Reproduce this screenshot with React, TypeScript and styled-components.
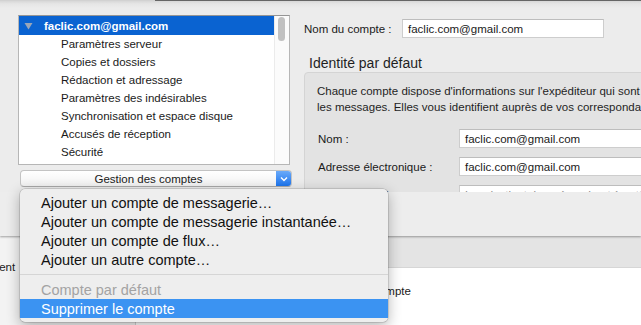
import React from "react";
import styled, { createGlobalStyle } from "styled-components";

const Global = createGlobalStyle`
  html, body { margin: 0; padding: 0; background: #ffffff; }
  * { box-sizing: border-box; }
`;

const FONT = `"Liberation Sans", Arial, sans-serif`;

const Screen = styled.div`
  position: relative;
  width: 641px;
  height: 325px;
  overflow: hidden;
  font-family: ${FONT};
  font-size: 11.5px;
  color: #1a1a1a;
  background: #ffffff;
`;

const Window = styled.div`
  position: relative;
  z-index: 1;
  height: 236px;
  display: flex;
  flex-direction: column;
  background: linear-gradient(#d3d3d3 0px, #e6e6e6 4px, #ececec 8px);
  box-shadow: 0 1px 2px rgba(0, 0, 0, 0.35);
`;

const TopEdge = styled.div`
  display: flex;
  height: 1px;
`;

const TopSeg = styled.div<{ $dark?: boolean; $w?: number }>`
  height: 1px;
  ${(p) => (p.$w ? `width: ${p.$w}px;` : "flex: 1;")}
  background: ${(p) => (p.$dark ? "#666666" : "#d2d2d2")};
`;

const Body = styled.div`
  height: 191px;
  display: flex;
  gap: 12px;
  padding-left: 18px;
  overflow: hidden;
`;

const LeftCol = styled.div`
  width: 274px;
  flex: none;
  padding-top: 14px;
  display: flex;
  flex-direction: column;
`;

const ListBox = styled.div`
  width: 272px;
  height: 150px;
  display: flex;
  background: #ffffff;
  border: 1px solid #b6b6b6;
  border-top-color: #959595;
`;

const Rows = styled.div`
  flex: 1;
  display: flex;
  flex-direction: column;
`;

const Row = styled.div<{ $selected?: boolean }>`
  height: ${(p) => (p.$selected ? 19 : 18)}px;
  display: flex;
  align-items: center;
  padding-left: ${(p) => (p.$selected ? 5 : 42)}px;
  gap: 11px;
  background: ${(p) => (p.$selected ? "#0a63d1" : "transparent")};
  color: ${(p) => (p.$selected ? "#ffffff" : "#1a1a1a")};
  font-weight: ${(p) => (p.$selected ? 700 : 400)};
  white-space: nowrap;
`;

const Track = styled.div`
  width: 15px;
  flex: none;
  background: #fbfbfb;
  border-left: 1px solid #ebebeb;
  padding: 1px 0 0 3px;
`;

const Thumb = styled.div`
  width: 7px;
  height: 24px;
  border-radius: 4px;
  background: #c1c1c1;
`;

const PopupButton = styled.div`
  margin: 5px 0 0 2px;
  width: 272px;
  height: 17px;
  display: flex;
  border: 1px solid #c3c3c3;
  border-bottom-color: #a8a8a8;
  border-radius: 4px;
  background: linear-gradient(#ffffff, #f1f1f1);
  overflow: hidden;
`;

const PopupLabel = styled.div`
  flex: 1;
  display: flex;
  align-items: center;
  justify-content: center;
  font-size: 11.5px;
  color: #1a1a1a;
`;

const PopupArrow = styled.div`
  width: 15px;
  display: flex;
  align-items: center;
  justify-content: center;
  background: linear-gradient(#6aaaf9, #1d75ee);
`;

const RightCol = styled.div`
  flex: 1;
  padding-top: 18px;
  display: flex;
  flex-direction: column;
  min-width: 400px;
`;

const FieldRow = styled.div<{ $labelWidth: number; $indent?: number }>`
  display: flex;
  align-items: center;
  height: 19px;
  margin-left: ${(p) => p.$indent ?? 0}px;
  & > span {
    width: ${(p) => p.$labelWidth}px;
    flex: none;
    white-space: nowrap;
  }
`;

const TextField = styled.div<{ $width: number; $placeholder?: boolean }>`
  width: ${(p) => p.$width}px;
  height: 19px;
  flex: none;
  display: flex;
  align-items: center;
  padding-left: 5px;
  background: #ffffff;
  border: 1px solid #cdcdcd;
  border-top-color: #bdbdbd;
  color: ${(p) => (p.$placeholder ? "#8a8a8a" : "#1a1a1a")};
  white-space: nowrap;
  overflow: hidden;
`;

const Heading = styled.div`
  margin-top: 17px;
  padding-left: 5px;
  height: 17px;
  line-height: 17px;
  font-size: 14px;
  color: #1f1f1f;
`;

const GroupBox = styled.div`
  width: 420px;
  border: 1px solid #d4d4d4;
  border-radius: 4px;
  background: #e3e3e3;
  padding: 10px 0 0 12px;
  display: flex;
  flex-direction: column;
  gap: 9px;
`;

const Description = styled.div`
  line-height: 16px;
  white-space: nowrap;
  margin-bottom: 5px;
  color: #1f1f1f;
`;

const Footer = styled.div`
  flex: 1;
  background: #ededed;
`;

const Lower = styled.div`
  display: flex;
  height: 89px;
`;

const Sidebar = styled.div`
  width: 136px;
  flex: none;
  background: #f3f3f3;
  border-right: 1px solid #d2d2d2;
  padding-top: 25px;
  overflow: hidden;
  white-space: nowrap;
  & > span {
    display: block;
    margin-left: -50px;
  }
`;

const Main = styled.div`
  flex: 1;
  display: flex;
  flex-direction: column;
`;

const Strip = styled.div`
  height: 32px;
  background: #e4e4e4;
  border-bottom: 1px solid #d6d6d6;
`;

const MainText = styled.div`
  padding: 17px 0 0 188px;
  white-space: nowrap;
`;

const Menu = styled.div`
  position: absolute;
  z-index: 5;
  left: 20px;
  top: 189px;
  width: 368px;
  padding: 4px 0;
  border-radius: 5px;
  background: #eeeeee;
  box-shadow: 0 0 0 0.5px rgba(0, 0, 0, 0.22), 0 4px 14px rgba(0, 0, 0, 0.3);
  font-size: 14.5px;
`;

const MenuItem = styled.div<{ $disabled?: boolean; $active?: boolean }>`
  height: 19px;
  display: flex;
  align-items: center;
  padding-left: 21px;
  white-space: nowrap;
  color: ${(p) => (p.$active ? "#ffffff" : p.$disabled ? "#a3a3a3" : "#111111")};
  background: ${(p) => (p.$active ? "#3b93f2" : "transparent")};
`;

const MenuSeparator = styled.div`
  height: 1px;
  margin: 5px 0;
  background: #d5d5d5;
`;

const Triangle = () => (
  <svg width="9" height="8" viewBox="0 0 9 8">
    <polygon points="0.5,1 8.5,1 4.5,7.5" fill="#9aa6b8" />
  </svg>
);

const Chevron = () => (
  <svg width="8" height="6" viewBox="0 0 8 6">
    <polyline points="1,1.5 4,4.5 7,1.5" fill="none" stroke="#ffffff" strokeWidth="1.4" />
  </svg>
);

const children = [
  "Paramètres serveur",
  "Copies et dossiers",
  "Rédaction et adressage",
  "Paramètres des indésirables",
  "Synchronisation et espace disque",
  "Accusés de réception",
  "Sécurité",
];

export default function App() {
  return (
    <>
      <Global />
      <Screen>
        <Window>
          <TopEdge>
            <TopSeg $w={155} />
            <TopSeg $dark />
          </TopEdge>
          <Body>
            <LeftCol>
              <ListBox>
                <Rows>
                  <Row $selected>
                    <Triangle />
                    <span>faclic.com@gmail.com</span>
                  </Row>
                  {children.map((c) => (
                    <Row key={c}>{c}</Row>
                  ))}
                </Rows>
                <Track>
                  <Thumb />
                </Track>
              </ListBox>
              <PopupButton>
                <PopupLabel>Gestion des comptes</PopupLabel>
                <PopupArrow>
                  <Chevron />
                </PopupArrow>
              </PopupButton>
            </LeftCol>
            <RightCol>
              <FieldRow $labelWidth={98}>
                <span>Nom du compte :</span>
                <TextField $width={202}>faclic.com@gmail.com</TextField>
              </FieldRow>
              <Heading>Identité par défaut</Heading>
              <GroupBox>
                <Description>
                  Chaque compte dispose d'informations sur l'expéditeur qui sont transmises dans
                  <br />
                  les messages. Elles vous identifient auprès de vos correspondants.
                </Description>
                <FieldRow $labelWidth={141} $indent={1}>
                  <span>Nom :</span>
                  <TextField $width={260}>faclic.com@gmail.com</TextField>
                </FieldRow>
                <FieldRow $labelWidth={141} $indent={1}>
                  <span>Adresse électronique :</span>
                  <TextField $width={260}>faclic.com@gmail.com</TextField>
                </FieldRow>
                <FieldRow $labelWidth={141} $indent={1}>
                  <span>Adresse de réponse :</span>
                  <TextField $width={260} $placeholder>
                    Les destinataires répondront à cette autre adresse
                  </TextField>
                </FieldRow>
              </GroupBox>
            </RightCol>
          </Body>
          <Footer />
        </Window>
        <Lower>
          <Sidebar>
            <span>Abonnement</span>
          </Sidebar>
          <Main>
            <Strip />
            <MainText>Nouveau compte</MainText>
          </Main>
        </Lower>
        <Menu>
          <MenuItem>Ajouter un compte de messagerie…</MenuItem>
          <MenuItem>Ajouter un compte de messagerie instantanée…</MenuItem>
          <MenuItem>Ajouter un compte de flux…</MenuItem>
          <MenuItem>Ajouter un autre compte…</MenuItem>
          <MenuSeparator />
          <MenuItem $disabled>Compte par défaut</MenuItem>
          <MenuItem $active>Supprimer le compte</MenuItem>
        </Menu>
      </Screen>
    </>
  );
}
